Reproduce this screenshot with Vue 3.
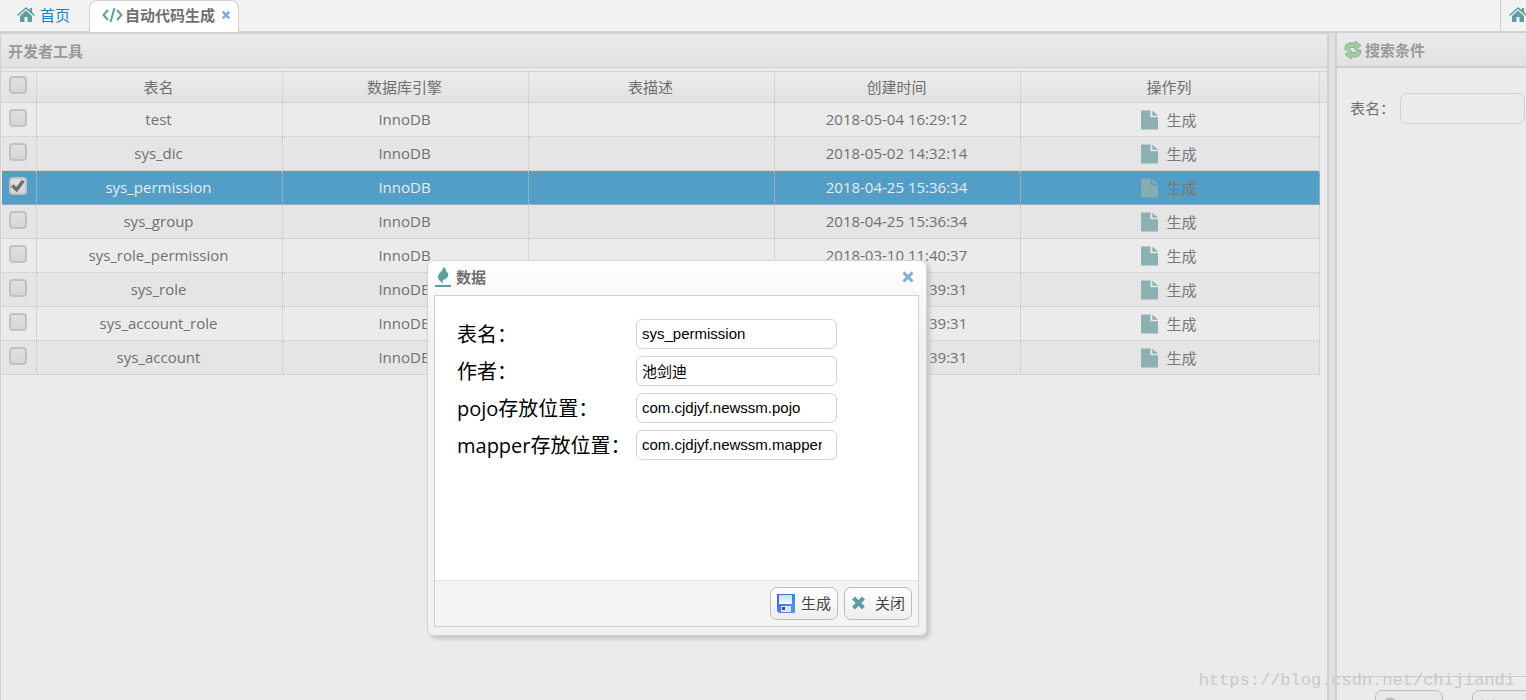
<script setup>
import { ref } from 'vue'

const rows = ref([
  { name: 'test', time: '2018-05-04 16:29:12', checked: false },
  { name: 'sys_dic', time: '2018-05-02 14:32:14', checked: false },
  { name: 'sys_permission', time: '2018-04-25 15:36:34', checked: true },
  { name: 'sys_group', time: '2018-04-25 15:36:34', checked: false },
  { name: 'sys_role_permission', time: '2018-03-10 11:40:37', checked: false },
  { name: 'sys_role', time: '2018-03-10 11:39:31', checked: false },
  { name: 'sys_account_role', time: '2018-03-10 11:39:31', checked: false },
  { name: 'sys_account', time: '2018-03-10 11:39:31', checked: false },
])
const fields = ref([
  { id: 'table', label: '表名：', value: 'sys_permission' },
  { id: 'author', label: '作者：', value: '池剑迪' },
  { id: 'pojo', label: 'pojo存放位置：', value: 'com.cjdjyf.newssm.pojo' },
  { id: 'mapper', label: 'mapper存放位置：', value: 'com.cjdjyf.newssm.mapper' },
])
const search = ref('')
const all = ref(false)
</script>

<template>
  <div class="page">
    <nav class="tabs">
      <a href="#" class="tab home">
        <svg class="house" viewBox="0 0 18 15"><path d="M9 0 0 8l1 1 8-7 8 7 1-1-3-3V1h-2v2zM9 3.500 3 9v6h4.500v-5h3v5H15V9z" /></svg>
        <span>首页</span>
      </a>
      <div class="tab active">
        <svg class="code" viewBox="0 0 21 16"><path d="M6 3 1.500 8 6 13M15 3l4.500 5L15 13M12.500 1l-4 14" /></svg>
        <span>自动代码生成</span>
        <button class="x small" aria-label="关闭标签"><svg viewBox="0 0 12 12"><path d="m2 2 8 8M10 2l-8 8" /></svg></button>
      </div>
      <a href="#" class="tab more" aria-label="首页">
        <svg class="house" viewBox="0 0 18 15"><path d="M9 0 0 8l1 1 8-7 8 7 1-1-3-3V1h-2v2zM9 3.500 3 9v6h4.500v-5h3v5H15V9z" /></svg>
      </a>
    </nav>

    <div class="work">
      <main class="left">
        <h2 class="bar">开发者工具</h2>
        <div class="grid">
          <table>
            <colgroup><col class="c-check" /><col /><col /><col /><col /><col class="c-op" /></colgroup>
            <thead>
              <tr>
                <th><input v-model="all" type="checkbox" aria-label="全选" /></th>
                <th>表名</th><th>数据库引擎</th><th>表描述</th><th>创建时间</th><th>操作列</th>
              </tr>
            </thead>
            <tbody>
              <tr v-for="r in rows" :key="r.name" :class="{ selected: r.checked }">
                <td><input v-model="r.checked" type="checkbox" :aria-label="r.name" /></td>
                <td>{{ r.name }}</td>
                <td>InnoDB</td>
                <td></td>
                <td>{{ r.time }}</td>
                <td class="op">
                  <button class="gen">
                    <svg viewBox="0 0 18 20"><path d="M0 0h10v7h8v13H0zM12 0l6 5.500h-6z" /></svg>
                    <span>生成</span>
                  </button>
                </td>
              </tr>
            </tbody>
          </table>
        </div>
      </main>
      <div class="splitter"></div>
      <aside class="right">
        <h2 class="bar">
          <svg class="refresh" viewBox="0 0 20 20">
            <path d="M2 8c0-4 3-5 6-5h4V1l6 4.500L12 10V7.500H8Q6 7.500 6 10H2zM18 11c0 4-3 6-6 6H8v2l-6-4.500L8 10v2.500h4q2 0 2-2.500h4z" />
          </svg>
          <span>搜索条件</span>
        </h2>
        <div class="search">
          <label for="search-name">表名：</label>
          <input id="search-name" v-model="search" type="text" />
        </div>
        <div class="foot">
          <button aria-label="查询"><svg viewBox="0 0 18 18"><circle cx="8" cy="8" r="6" /><path d="m12 12 5 5" /></svg></button>
          <button aria-label="清空"><svg viewBox="0 0 18 18"><path d="m3 3 12 12M15 3 3 15" /></svg></button>
        </div>
      </aside>
    </div>

    <section class="dialog" role="dialog" aria-labelledby="dialog-title">
      <header>
        <svg class="flame" viewBox="0 0 16 20"><path d="M8 0c1 4-5 5-5 10 0 3 3 4 5 7 0-2-1-3 0-4 4-1 6-4 5-7-1-1-2-1-2-3 0-1-1-2-3-3z" /><path d="M0 18h16v2H0z" /></svg>
        <h3 id="dialog-title">数据</h3>
        <button class="x" aria-label="关闭窗口"><svg viewBox="0 0 12 12"><path d="m1.500 1.500 9 9M10.500 1.500l-9 9" /></svg></button>
      </header>
      <div class="frame">
        <form>
          <template v-for="f in fields" :key="f.id">
            <label :for="f.id">{{ f.label }}</label>
            <input :id="f.id" v-model="f.value" type="text" />
          </template>
        </form>
        <footer>
          <button>
            <svg class="disk" viewBox="0 0 18 19">
              <defs>
                <linearGradient id="disk-body" x2="1" y2="1">
                  <stop offset="0" stop-color="#3f66cc" />
                  <stop offset="1" stop-color="#4f9cff" />
                </linearGradient>
                <linearGradient id="disk-label" x2="0" y2="1">
                  <stop offset="0" stop-color="#c3dcf8" />
                  <stop offset="1" stop-color="#f6fbff" />
                </linearGradient>
              </defs>
              <path d="M0 0h18v19H2l-2-2z" fill="url(#disk-body)" />
              <path d="M2 1h13v9H2z" fill="url(#disk-label)" />
              <path d="M4 12h10v6H4z" fill="#e0e0ee" />
              <path d="M5 13h3v3H5z" fill="#3c50a8" />
            </svg>
            <span>生成</span>
          </button>
          <button>
            <svg class="cross" viewBox="0 0 14 14"><path d="m2 2 10 10M12 2 2 12" /></svg>
            <span>关闭</span>
          </button>
        </footer>
      </div>
    </section>
    <div class="mark">https://blog.csdn.net/chijiandi</div>
  </div>
</template>

<style>
body { margin: 0; }
</style>

<style scoped>
.page {
  position: relative;
  display: flex;
  flex-direction: column;
  height: 100vh;
  overflow: hidden;
  background: #ebebeb;
  color: #707070;
  font: 15px/20px "Open Sans", "Noto Sans CJK SC", sans-serif;
}
* { box-sizing: border-box; }
button, input { font: inherit; color: inherit; margin: 0; }
button { padding: 0; border: 0; background: none; }
h2, h3 { margin: 0; font-size: 15px; font-weight: bold; }
svg { flex: none; }

.tabs {
  display: flex;
  height: 33px;
  flex: none;
  background: #f2f2f2;
  border-bottom: 2px solid #d0d0d0;
}
.tab { display: flex; align-items: center; padding-bottom: 2px; text-decoration: none; }
.home { width: 89px; padding-left: 17px; gap: 5px; color: #0e86cc; }
.house { width: 18px; height: 15px; fill: #5f9ea0; }
.active {
  height: 32px;
  width: 150px;
  padding: 0 0 3px 12px;
  background: #fff;
  border: 1px solid #d0d0d0;
  border-bottom: 0;
  border-radius: 8px 8px 0 0;
  font-weight: bold;
}
.code { width: 21px; height: 16px; margin-right: 2px; fill: none; stroke: #5f9ea0; stroke-width: 2; }
.x { display: flex; }
.x svg { width: 12px; height: 12px; fill: none; stroke: #86aada; stroke-width: 3; }
.x.small { margin-left: 6px; }
.x.small svg { width: 10px; height: 10px; stroke-width: 3; }
.more { margin-left: auto; width: 26px; padding-left: 8px; border-left: 1px solid #d0d0d0; overflow: hidden; }

.work { display: flex; flex: 1; min-height: 0; }
.left { flex: 1; min-width: 0; border: solid #d0d0d0; border-width: 1px 2px 0 1px; }
.splitter { width: 6px; background: #e1e1e1; }
.right {
  display: flex;
  flex-direction: column;
  width: 191px;
  overflow: hidden;
  border-left: 2px solid #d0d0d0;
}
.bar {
  display: flex;
  align-items: center;
  gap: 2px;
  height: 34px;
  padding-left: 7px;
  color: #999;
  background: linear-gradient(#ebebeb, #e2e2e2);
  border-bottom: 1px solid #d0d0d0;
}
.right .bar { height: 35px; padding-left: 6px; border-bottom-width: 2px; }
.refresh { width: 20px; height: 20px; fill: #9fce9e; stroke: #88b39a; stroke-width: 1; }

.grid {
  margin-top: 3px;
  padding: 0 7px 0 1px;
  background:
    linear-gradient(#d5d5d5, #d5d5d5) 0 0 / 100% 1px no-repeat,
    linear-gradient(#d5d5d5, #d5d5d5) 0 31px / 100% 1px no-repeat,
    linear-gradient(#ebebeb, #e2e2e2) 0 0 / 100% 32px no-repeat;
}
table { width: 100%; table-layout: fixed; border-collapse: separate; border-spacing: 0; }
.c-check { width: 35px; }
.c-op { width: 299px; }
th, td {
  padding: 0 2px 0 0;
  text-align: center;
  font-weight: normal;
  border-right: 1px dotted #c2c2c2;
  vertical-align: middle;
}
th { height: 32px; }
td { height: 34px; padding-bottom: 2px; border-bottom: 1px dotted #c2c2c2; }
.op { padding-bottom: 0; }
tbody tr:nth-child(even) { background: #e5e5e5; }
tbody tr.selected { background: #529ec7; color: #ebebeb; }
.selected td { font-weight: 500; }
input[type="checkbox"] {
  appearance: none;
  display: block;
  width: 18px;
  height: 18px;
  margin: 0 0 1px 7px;
  background: linear-gradient(#e0e0e0, #d6d6d6);
  border: 2px solid #c2c2c2;
  border-radius: 4px;
}
th input[type="checkbox"] { margin-bottom: 5px; }
input[type="checkbox"]:checked::before {
  content: "";
  display: block;
  width: 14px;
  height: 14px;
  background: #707070;
  clip-path: polygon(0 55%, 18% 38%, 38% 58%, 78% 5%, 98% 20%, 42% 95%);
}
.gen { display: inline-flex; align-items: center; gap: 8px; font-weight: normal; color: #777; vertical-align: middle; }
.gen svg { width: 17px; height: 20px; fill: #8db0b2; }
.selected .gen svg { fill: #86aeb1; }

.search { flex: 1; display: flex; align-items: flex-start; padding: 25px 0 0 13px; line-height: 30px; }
.search label { width: 50px; flex: none; }
.search input { width: 125px; height: 31px; flex: none; border: 1px solid #d0d0d0; border-radius: 7px; background: #ebebeb; }
.foot { display: flex; gap: 29px; height: 24px; padding: 13px 0 0 38px; border-top: 1px solid #ccc; }
.foot button {
  width: 68px;
  height: 33px;
  flex: none;
  padding: 6px;
  text-align: left;
  border: 1px solid #bdbdbd;
  border-radius: 7px;
  background: #e8e8e8;
}
.foot svg { width: 18px; height: 18px; fill: none; stroke: #b8c0c4; stroke-width: 3; }

.dialog {
  position: absolute;
  left: 427px;
  top: 260px;
  width: 500px;
  height: 376px;
  display: flex;
  flex-direction: column;
  padding: 0 7px 8px 6px;
  border: 1px solid #d3d3d3;
  border-radius: 7px;
  background: linear-gradient(#fff, #f1f1f1 80px);
  box-shadow: 3px 3px 4px #c4c4c4;
}
.dialog header { display: flex; align-items: center; height: 34px; padding: 0 5px 2px 1px; }
.flame { width: 16px; height: 20px; margin-right: 5px; fill: #5f9ea0; }
.dialog header .x { margin-left: auto; }
.frame { flex: 1; display: flex; flex-direction: column; border: 1px solid #d0d0d0; background: #f4f4f4; }
form {
  flex: 1;
  display: grid;
  grid-template-columns: 179px 201px;
  align-content: start;
  align-items: center;
  row-gap: 7px;
  padding: 23px 0 0 22px;
  background: #fff;
  color: #000;
}
form label { padding-top: 2px; font-size: 20px; line-height: 28px; white-space: nowrap; }
form input {
  width: 100%;
  height: 30px;
  padding: 0 14px 2px 5px;
  border: 1px solid #d3d3d3;
  border-radius: 6px;
  background: #fff;
  font: 15px "Liberation Sans", "Noto Sans CJK SC", sans-serif;
}
footer {
  display: flex;
  align-items: center;
  justify-content: flex-end;
  gap: 6px;
  height: 46px;
  padding-right: 6px;
  border-top: 1px solid #e2e2e2;
}
footer button {
  display: flex;
  align-items: center;
  justify-content: space-between;
  width: 68px;
  height: 33px;
  padding: 0 6px 1px;
  color: #444;
  border: 1px solid #bbb;
  border-radius: 7px;
  background: linear-gradient(#fff, #eee);
}
.disk { width: 18px; height: 19px; }
.cross { width: 15px; height: 14px; fill: none; stroke: #5f9ea0; stroke-width: 4; }
.mark {
  position: absolute;
  right: 11px;
  bottom: 9px;
  color: #c9c9c3;
  font: 17px/20px "Liberation Mono", monospace;
  pointer-events: none;
}
</style>
